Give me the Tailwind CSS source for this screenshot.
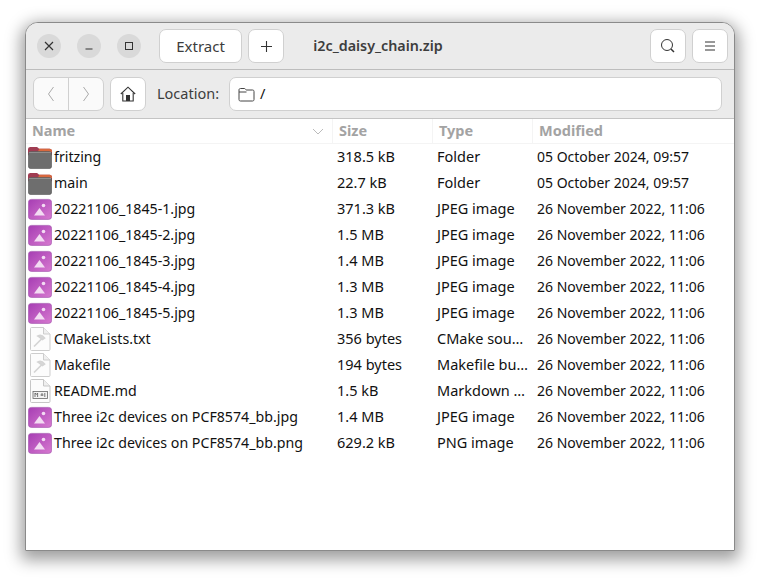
<!DOCTYPE html>
<html lang="en">
<head>
<meta charset="UTF-8">
<title>i2c_daisy_chain.zip</title>
<script src="https://cdn.jsdelivr.net/npm/@tailwindcss/browser@4"></script>
</head>
<body class="bg-white min-h-[579px] font-['Noto_Sans','Open_Sans',sans-serif] text-[14.5px] text-[#111] pt-[22px]">

<svg width="0" height="0" class="absolute">
  <symbol id="folder" viewBox="0 0 24 24">
    <path d="M0 4.500C0 2.800 1 2 2.500 2h6c1.400 0 1.800 1.700 3.200 1.700H21.500c1.600 0 2.500 1 2.500 2.500v4H0z" fill="#a03c52"/>
    <path d="M11.500 3.700h10c1.600 0 2.500 1 2.500 2.500v.8H9.500z" fill="#d8683e"/>
    <rect x=".4" y="6.600" width="23.200" height="17" rx="2.500" fill="#6e6e6e" stroke="#5c5c5c" stroke-width=".7"/>
    <rect x="1" y="7" width="22" height="1" fill="#8e8e8e"/>
  </symbol>
  <symbol id="image" viewBox="0 0 24 24">
    <defs>
      <linearGradient id="imgfill" x1="0" y1="0" x2="1" y2="1">
        <stop offset="0" stop-color="#a63db3"/>
        <stop offset="1" stop-color="#d77ad0"/>
      </linearGradient>
    </defs>
    <rect x=".4" y="2.400" width="23.200" height="20" rx="3" fill="url(#imgfill)" stroke="#a65ab0" stroke-width=".7"/>
    <circle cx="15.500" cy="8.500" r="1.800" fill="#f3dcf3"/>
    <path d="M6 18.500l5.500-7.500 5.500 7.500z" fill="#f3dcf3"/>
  </symbol>
  <symbol id="script" viewBox="0 0 24 24">
    <path d="M2.500 1.500c0-.6.400-1 1-1h12L22 7v15.500c0 .6-.4 1-1 1H3.500c-.6 0-1-.4-1-1z" fill="#fcfcfc" stroke="#cdcdcd"/>
    <path d="M15.500.5V7H22" fill="#efefef" stroke="#cdcdcd"/>
    <path d="M6 19.500l8-8M10 9c2-1 4.500-.5 6.500 2l-2 1.500-3-2.500z" fill="#d8d8d8" stroke="#d4d4d4" stroke-width="1.700"/>
  </symbol>
  <symbol id="markdown" viewBox="0 0 24 24">
    <path d="M2.500 1.500c0-.6.400-1 1-1h12L22 7v15.500c0 .6-.4 1-1 1H3.500c-.6 0-1-.4-1-1z" fill="#fcfcfc" stroke="#c6c6c6"/>
    <path d="M15.500.5V7H22" fill="#efefef" stroke="#c6c6c6"/>
    <rect x="5" y="12.500" width="14.500" height="7" fill="#f2f2f2" stroke="#666" stroke-width=".8"/>
    <path d="M7 18v-4l1.300 1.500L9.600 14v4M14 14v3M12.500 16h3M16.800 14v4" fill="none" stroke="#555" stroke-width=".8"/>
  </symbol>
</svg>

<div class="ml-[25px] w-[710px] h-[529px] flex flex-col rounded-t-[13px] rounded-b-[1px] border border-[#8a8a8a] bg-white overflow-hidden shadow-[0_5px_16px_4px_rgba(0,0,0,0.38)]">

  <!-- title bar -->
  <header class="h-[47px] shrink-0 flex items-center bg-[#ebebeb] border-b border-[#bdbdbd] pl-[11px] pr-[6px]">
    <button class="w-[24px] h-[24px] rounded-full bg-[#d9d9d9] flex items-center justify-center">
      <svg width="10" height="10" viewBox="0 0 10 10"><path d="M1 1l8 8M9 1l-8 8" stroke="#333" stroke-width="1.200"/></svg>
    </button>
    <button class="ml-[16px] w-[24px] h-[24px] rounded-full bg-[#d9d9d9] flex items-center justify-center">
      <svg width="10" height="10" viewBox="0 0 10 10"><path d="M1.500 8h7" stroke="#333" stroke-width="1.200"/></svg>
    </button>
    <button class="ml-[16px] w-[24px] h-[24px] rounded-full bg-[#d9d9d9] flex items-center justify-center">
      <svg width="10" height="10" viewBox="0 0 10 10"><rect x="1.500" y="1.500" width="7" height="7" fill="none" stroke="#333" stroke-width="1"/></svg>
    </button>
    <button class="ml-[18px] w-[83px] h-[34px] rounded-[7px] bg-white border border-[#d0d0d0] text-[#3d3d3d] text-[15px]">Extract</button>
    <button class="ml-[6px] w-[36px] h-[34px] rounded-[7px] bg-white border border-[#d0d0d0] flex items-center justify-center">
      <svg width="13" height="13" viewBox="0 0 13 13"><path d="M6.500 1v11M1 6.500h11" stroke="#333" stroke-width="1.100"/></svg>
    </button>
    <div class="flex-1 text-center font-semibold text-[14.3px] text-[#3d3d3d] pr-[178px]">i2c_daisy_chain.zip</div>
    <button class="w-[36px] h-[34px] rounded-[7px] bg-white border border-[#d0d0d0] flex items-center justify-center">
      <svg width="16" height="16" viewBox="0 0 16 16"><circle cx="7" cy="7" r="5.500" fill="none" stroke="#333" stroke-width="1"/><path d="M11 11l3 3" stroke="#333" stroke-width="1.500"/></svg>
    </button>
    <button class="ml-[6px] w-[36px] h-[34px] rounded-[7px] bg-white border border-[#d0d0d0] flex items-center justify-center">
      <svg width="12" height="10" viewBox="0 0 12 10"><path d="M1 1h10M1 5h10M1 9h10" stroke="#333" stroke-width="1"/></svg>
    </button>
  </header>

  <!-- location bar -->
  <div class="h-[49px] shrink-0 flex items-center bg-[#ebebeb] border-b border-[#c4c4c4] pl-[7px] pr-[12px]">
    <div class="flex w-[71px] h-[34px] rounded-[7px] bg-[#fafafa] border border-[#d0d0d0]">
      <div class="flex-1 flex items-center justify-center border-r border-[#d0d0d0]">
        <svg width="8" height="16" viewBox="0 0 8 16"><path d="M6.500 1L1.500 8l5 7" fill="none" stroke="#aaa"/></svg>
      </div>
      <div class="flex-1 flex items-center justify-center">
        <svg width="8" height="16" viewBox="0 0 8 16"><path d="M1.500 1l5 7-5 7" fill="none" stroke="#aaa"/></svg>
      </div>
    </div>
    <button class="ml-[6px] w-[36px] h-[34px] rounded-[7px] bg-white border border-[#d0d0d0] flex items-center justify-center">
      <svg width="16" height="16" viewBox="0 0 16 16"><path d="M.8 8L8 1.200 15.200 8" fill="none" stroke="#333" stroke-width="1.100"/><path d="M2.800 7v8h10.400V7" fill="none" stroke="#333" stroke-width="1.100"/><rect x="6" y="9" width="4" height="6" fill="#333"/></svg>
    </button>
    <span class="ml-[11px] w-[72px] text-[#3d3d3d]">Location:</span>
    <div class="flex-1 h-[34px] rounded-[7px] bg-white border border-[#d0d0d0] flex items-center pl-[8px] gap-[5px]">
      <svg width="17" height="15" viewBox="0 0 17 15"><path d="M1 3c0-1 .6-1.500 1.500-1.500h4c1 0 1 1.500 2 1.500h6c1 0 1.500.6 1.500 1.500V12.500c0 1-.6 1.500-1.500 1.500h-12C1.600 14 1 13.500 1 12.500zM1 5h7.500" fill="none" stroke="#444"/></svg>
      <span>/</span>
    </div>
  </div>

  <!-- columns -->
  <div class="h-[25px] shrink-0 grid grid-cols-[307px_100px_100px_1fr] font-bold text-[#a3a3a3] border-b border-[#f4f4f4]">
    <div class="flex items-center justify-between pl-[6px] pr-[8px] border-r border-[#f4f4f4]">Name
      <svg width="12" height="7" viewBox="0 0 12 7"><path d="M1 1l5 5 5-5" fill="none" stroke="#bbb"/></svg>
    </div>
    <div class="flex items-center pl-[6px] border-r border-[#f4f4f4]">Size</div>
    <div class="flex items-center pl-[6px] border-r border-[#f4f4f4]">Type</div>
    <div class="flex items-center pl-[6px]">Modified</div>
  </div>

  <!-- files -->
  <ul class="flex-1 [&>li]:h-[26px] [&>li]:grid [&>li]:grid-cols-[307px_100px_100px_1fr] [&>li]:items-center [&>li>div]:pl-[4px] [&>li>div:first-child]:pl-[2px] [&>li>div:first-child]:flex [&>li>div:first-child]:items-center [&>li>div:first-child]:gap-[2px] [&>li>div:first-child]:text-[14.2px] [&>li>div:last-child]:text-[14px] [&>li>div:last-child]:pb-[2px]">
    <li><div><svg class="w-[24px] h-[24px]"><use href="#folder"/></svg>fritzing</div><div>318.5 kB</div><div>Folder</div><div>05 October 2024, 09:57</div></li>
    <li><div><svg class="w-[24px] h-[24px]"><use href="#folder"/></svg>main</div><div>22.7 kB</div><div>Folder</div><div>05 October 2024, 09:57</div></li>
    <li><div><svg class="w-[24px] h-[24px]"><use href="#image"/></svg>20221106_1845-1.jpg</div><div>371.3 kB</div><div>JPEG image</div><div>26 November 2022, 11:06</div></li>
    <li><div><svg class="w-[24px] h-[24px]"><use href="#image"/></svg>20221106_1845-2.jpg</div><div>1.5 MB</div><div>JPEG image</div><div>26 November 2022, 11:06</div></li>
    <li><div><svg class="w-[24px] h-[24px]"><use href="#image"/></svg>20221106_1845-3.jpg</div><div>1.4 MB</div><div>JPEG image</div><div>26 November 2022, 11:06</div></li>
    <li><div><svg class="w-[24px] h-[24px]"><use href="#image"/></svg>20221106_1845-4.jpg</div><div>1.3 MB</div><div>JPEG image</div><div>26 November 2022, 11:06</div></li>
    <li><div><svg class="w-[24px] h-[24px]"><use href="#image"/></svg>20221106_1845-5.jpg</div><div>1.3 MB</div><div>JPEG image</div><div>26 November 2022, 11:06</div></li>
    <li><div><svg class="w-[24px] h-[24px]"><use href="#script"/></svg>CMakeLists.txt</div><div>356 bytes</div><div>CMake sou…</div><div>26 November 2022, 11:06</div></li>
    <li><div><svg class="w-[24px] h-[24px]"><use href="#script"/></svg>Makefile</div><div>194 bytes</div><div>Makefile bu…</div><div>26 November 2022, 11:06</div></li>
    <li><div><svg class="w-[24px] h-[24px]"><use href="#markdown"/></svg>README.md</div><div>1.5 kB</div><div>Markdown …</div><div>26 November 2022, 11:06</div></li>
    <li><div><svg class="w-[24px] h-[24px]"><use href="#image"/></svg>Three i2c devices on PCF8574_bb.jpg</div><div>1.4 MB</div><div>JPEG image</div><div>26 November 2022, 11:06</div></li>
    <li><div><svg class="w-[24px] h-[24px]"><use href="#image"/></svg>Three i2c devices on PCF8574_bb.png</div><div>629.2 kB</div><div>PNG image</div><div>26 November 2022, 11:06</div></li>
  </ul>
</div>
</body>
</html>
